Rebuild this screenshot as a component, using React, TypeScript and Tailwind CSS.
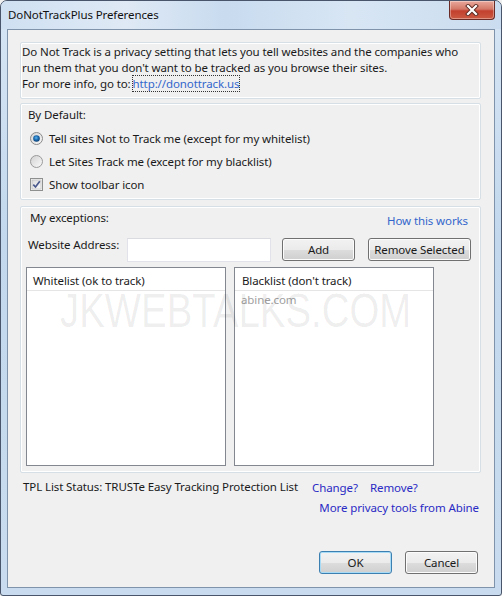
import React from "react";

function RadioOn() {
  return (
    <svg width="13" height="13" viewBox="0 0 13 13">
      <defs>
        <linearGradient id="rb" x1="0" y1="0" x2="1" y2="1">
          <stop offset="0" stopColor="#d4d4d4" />
          <stop offset="1" stopColor="#f8f8f8" />
        </linearGradient>
        <radialGradient id="rdot" cx="0.45" cy="0.4" r="0.6">
          <stop offset="0" stopColor="#5fb6f0" />
          <stop offset="0.5" stopColor="#1d6fb4" />
          <stop offset="1" stopColor="#0b3e73" />
        </radialGradient>
      </defs>
      <circle cx="6.5" cy="6.5" r="6" fill="url(#rb)" stroke="#8a8a8a" strokeWidth="1" />
      <circle cx="6.5" cy="6.5" r="3.3" fill="url(#rdot)" />
    </svg>
  );
}

function RadioOff() {
  return (
    <svg width="13" height="13" viewBox="0 0 13 13">
      <defs>
        <linearGradient id="rb2" x1="0" y1="0" x2="1" y2="1">
          <stop offset="0" stopColor="#d0d0d0" />
          <stop offset="1" stopColor="#fbfbfb" />
        </linearGradient>
      </defs>
      <circle cx="6.5" cy="6.5" r="6" fill="url(#rb2)" stroke="#9a9a9a" strokeWidth="1" />
    </svg>
  );
}

function CheckOn() {
  return (
    <svg width="13" height="13" viewBox="0 0 13 13">
      <defs>
        <linearGradient id="cb" x1="0" y1="0" x2="1" y2="1">
          <stop offset="0" stopColor="#dcdcdc" />
          <stop offset="1" stopColor="#fafafa" />
        </linearGradient>
      </defs>
      <rect x="0.5" y="0.5" width="12" height="12" fill="#f4f4f4" stroke="#8e8f8f" />
      <rect x="2" y="2" width="9" height="9" fill="url(#cb)" stroke="#b6b6b6" strokeWidth="0.6" />
      <path d="M3.3 6.6 L5.5 9 L9.8 3.2" fill="none" stroke="#4b5a8c" strokeWidth="1.7" />
    </svg>
  );
}

function WinButton({ label, width, primary }: { label: string; width: string; primary?: boolean }) {
  return (
    <div
      className={`${width} h-[23px] flex items-center justify-center rounded-[3px] border ${
        primary ? "border-[#3c7fb1] shadow-[inset_0_0_0_1px_#a8dcf6]" : "border-[#707070] shadow-[inset_0_0_0_1px_#fcfcfc]"
      } bg-[linear-gradient(180deg,#f2f2f2_0%,#ebebeb_50%,#dddddd_51%,#cfcfcf_100%)] text-[#1a1a1a]`}
    >
      {label}
    </div>
  );
}

export default function App() {
  return (
    <div className="w-[502px] h-[596px] font-['Noto_Sans',sans-serif] text-[#1a1a1a] bg-[#f0f0f0] text-[11.5px] tracking-[-0.1px]">
      <div className="relative w-[502px] h-[596px] flex flex-col border border-[#48556a] rounded-t-[7px] rounded-b-[3px] overflow-hidden bg-[linear-gradient(180deg,#c6dbf0_0%,#d4e4f4_5%,#c3d8ed_40%,#c9dcef_100%)]">
        {/* Title bar */}
        <div className="h-[28px] flex justify-between shrink-0 bg-[linear-gradient(90deg,#cfe0f2_0%,#dfe9f5_25%,#c8dbef_45%,#d8e6f4_70%,#cadcef_100%)]">
          <div className="pl-[7px] pt-[6px] leading-[16px] text-[#111]">DoNotTrackPlus Preferences</div>
          <div className="mr-[6px] w-[46px] h-[19px] rounded-b-[4px] border border-t-0 border-[#6a2a26] bg-[linear-gradient(180deg,#e9a99c_0%,#d47868_45%,#c2402e_55%,#cc5a42_100%)] shadow-[inset_0_0_0_1px_rgba(255,255,255,0.35)] flex items-center justify-center">
            <svg width="14" height="12" viewBox="0 0 14 12">
              <path d="M3 2 L11 10 M11 2 L3 10" stroke="#5a2a22" strokeWidth="4" strokeLinecap="square" />
              <path d="M3 2 L11 10 M11 2 L3 10" stroke="#ffffff" strokeWidth="2.2" strokeLinecap="square" />
            </svg>
          </div>
        </div>

        {/* Client */}
        <div className="flex-1 mx-[6px] mb-[7px] border border-[#7f93ab] bg-[#f0f0f0] flex flex-col pt-[12px] pl-[12px] pr-[13px] pb-[12px] relative">
          {/* Box 1 */}
          <div className="h-[57px] shrink-0 border border-[#d5dfe5] rounded-[2px] shadow-[inset_0_0_0_1px_#ffffff] pl-[1px] pt-[1px] leading-[16px]">
            <div className="whitespace-nowrap">Do Not Track is a privacy setting that lets you tell websites and the companies who</div>
            <div className="whitespace-nowrap">run them that you don't want to be tracked as you browse their sites.</div>
            <div className="whitespace-nowrap">
              For more info, go to:<span className="outline outline-1 outline-dotted outline-[#333] text-[#3366cc] ml-[2px]">http://donottrack.us</span>
            </div>
          </div>

          {/* Box 2 */}
          <div className="mt-[4px] h-[97px] shrink-0 border border-[#d5dfe5] rounded-[2px] shadow-[inset_0_0_0_1px_#ffffff] pt-[3px] leading-[16px]">
            <div className="pl-[7px] h-[16px]">By Default:</div>
            <div className="mt-[4px] flex flex-col pl-[9px]">
              <div className="h-[23px] flex items-center gap-[6px]">
                <RadioOn />
                <span>Tell sites Not to Track me (except for my whitelist)</span>
              </div>
              <div className="h-[23px] flex items-center gap-[6px]">
                <RadioOff />
                <span>Let Sites Track me (except for my blacklist)</span>
              </div>
              <div className="h-[23px] flex items-center gap-[6px]">
                <CheckOn />
                <span>Show toolbar icon</span>
              </div>
            </div>
          </div>

          {/* Box 3 */}
          <div className="mt-[6px] h-[267px] shrink-0 border border-[#d5dfe5] rounded-[2px] shadow-[inset_0_0_0_1px_#ffffff] pt-[3px] leading-[16px]">
            <div className="h-[16px] flex justify-between items-start pl-[9px] pr-[12px]">
              <span>My exceptions:</span>
              <span className="text-[#3366cc] translate-y-[3px]">How this works</span>
            </div>
            <div className="mt-[12px] h-[24px] flex items-start pl-[7px]">
              <span className="w-[99px] leading-[14px]">Website Address:</span>
              <div className="w-[144px] h-[24px] bg-white border border-[#e2e3ea] border-t-[#dadbe0]" />
              <div className="ml-[11px]">
                <WinButton label="Add" width="w-[73px]" />
              </div>
              <div className="ml-[13px]">
                <WinButton label="Remove Selected" width="w-[103px]" />
              </div>
            </div>
            <div className="mt-[5px] flex gap-[8px] pl-[5px]">
              <div className="w-[200px] h-[199px] bg-white border border-[#828790] flex flex-col">
                <div className="h-[23px] border-b border-[#e5e5e5] flex items-center pt-[3px] pl-[6px]">Whitelist (ok to track)</div>
              </div>
              <div className="w-[200px] h-[199px] bg-white border border-[#828790] flex flex-col">
                <div className="h-[23px] border-b border-[#e5e5e5] flex items-center pt-[3px] pl-[7px]">Blacklist (don't track)</div>
                <div className="pl-[6px] pt-[1px] text-[#a0a0a0]">abine.com</div>
              </div>
            </div>
          </div>

          {/* TPL status */}
          <div className="mt-[6px] h-[16px] flex items-start pl-[3px] leading-[16px] whitespace-nowrap">
            <span className="w-[289px]">TPL List Status: TRUSTe Easy Tracking Protection List</span>
            <span className="w-[58px] text-[#2a2ac4] translate-y-[1px]">Change?</span>
            <span className="text-[#2a2ac4] translate-y-[1px]">Remove?</span>
          </div>
          <div className="mt-[5px] flex justify-end pr-[2px] leading-[16px]">
            <span className="text-[#2a2ac4]">More privacy tools from Abine</span>
          </div>

          {/* Buttons */}
          <div className="mt-auto flex justify-end gap-[13px] pr-[3px] pb-[1px]">
            <WinButton label="OK" width="w-[73px]" primary />
            <WinButton label="Cancel" width="w-[73px]" />
          </div>

          {/* Watermark */}
          <div className="absolute left-[52px] top-[253px] pointer-events-none text-[48px] leading-[56px] tracking-normal font-['Liberation_Sans',sans-serif] text-[rgba(0,0,0,0.07)] origin-left scale-x-[0.8] whitespace-nowrap">
            JKWEBTALKS.COM
          </div>
        </div>
      </div>
    </div>
  );
}
